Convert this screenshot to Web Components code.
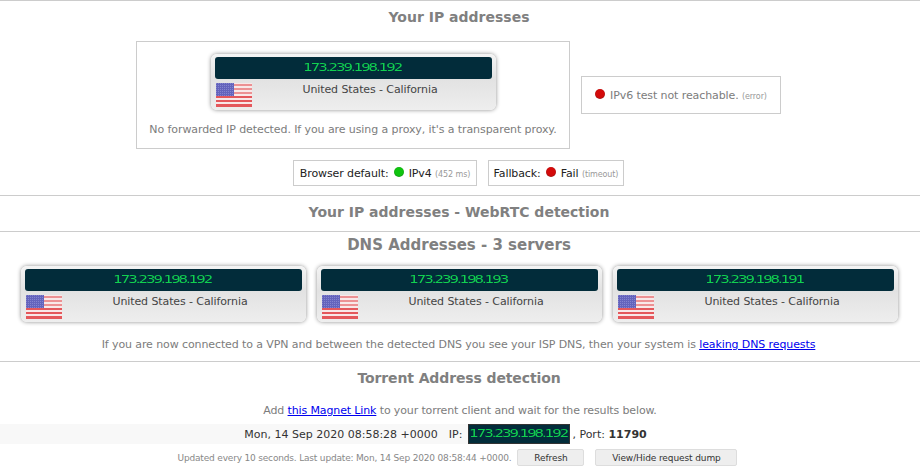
<!DOCTYPE html>
<html>
<head>
<meta charset="utf-8">
<style>
  html, body { margin: 0; padding: 0; background: #fff; }
  body { font-family: "DejaVu Sans", sans-serif; font-size: 11px; letter-spacing: -.1px; color: #222; width: 920px; height: 473px; overflow: hidden; }
</style>
</head>
<body>
<test-page></test-page>

<script>
class FlagUs extends HTMLElement {
  connectedCallback() {
    if (this.shadowRoot) return;
    this.attachShadow({ mode: "open" }).innerHTML = `
      <style>:host { display: block; width: 36px; height: 24px; } svg { display: block; filter: blur(.25px); }</style>
      <svg width="36" height="24" viewBox="0 0 36 24">
        <defs>
          <pattern id="stars" width="2" height="2" patternUnits="userSpaceOnUse">
            <rect width="2" height="2" fill="#6464bc"/>
            <rect width="1" height="1" fill="#8484cf"/>
          </pattern>
        </defs>
        <rect width="36" height="24" fill="#f8e8e8"/>
        <g fill="#ec9193">
          <rect x="18" y="1" width="18" height="2"/>
          <rect x="18" y="5" width="18" height="2"/>
          <rect x="18" y="9" width="18" height="2"/>
        </g>
        <g fill="#e4585c">
          <rect y="13" width="36" height="2"/>
          <rect y="17" width="36" height="2"/>
          <rect y="21" width="36" height="3"/>
        </g>
        <rect width="18" height="13" fill="url(#stars)"/>
      </svg>`;
  }
}
customElements.define("flag-us", FlagUs);

class IpText extends HTMLElement {
  connectedCallback() {
    if (this.shadowRoot) return;
    // squat, wide digits: the original is a digital font, stretched here to the same width
    this.attachShadow({ mode: "open" }).innerHTML = `
      <style>
        :host { display: inline-block; color: #11d050; font: 11px "DejaVu Sans", sans-serif; letter-spacing: -1.46px; transform: scaleX(1.35); white-space: nowrap; }
      </style>
      <slot></slot>`;
  }
}
customElements.define("ip-text", IpText);

class IpCard extends HTMLElement {
  connectedCallback() {
    if (this.shadowRoot) return;
    this.attachShadow({ mode: "open" }).innerHTML = `
      <style>
        :host { display: block; width: 285px; height: 56px; box-sizing: border-box; border-radius: 6px;
          background: linear-gradient(#f4f4f4, #e2e2e2 45%, #eeeeee); box-shadow: 0 0 4px rgba(0,0,0,.45); }
        .ip { margin: 3px 4px 0 4px; height: 22px; line-height: 22px; background: #022c3a; border-radius: 3px; text-align: center; padding-right: 1px; }
        .bottom { display: grid; grid-template-columns: 36px 1fr; padding: 4px 5px 0 5px; }
        .place { text-align: center; color: #444; line-height: 13px; padding-right: 2px; }
      </style>
      <div class="ip"><ip-text><slot></slot></ip-text></div>
      <div class="bottom"><flag-us></flag-us><div class="place">United States - California</div></div>`;
  }
}
customElements.define("ip-card", IpCard);

class SectionHeading extends HTMLElement {
  connectedCallback() {
    if (this.shadowRoot) return;
    this.attachShadow({ mode: "open" }).innerHTML = `
      <style>
        :host { display: block; text-align: center; font: bold 14px/17px "DejaVu Sans", sans-serif; letter-spacing: 0; color: #808080; padding-right: 2px; }
      </style>
      <slot></slot>`;
  }
}
customElements.define("section-heading", SectionHeading);

class StatusDot extends HTMLElement {
  connectedCallback() {
    if (this.shadowRoot) return;
    const green = this.getAttribute("color") === "green";
    const color = green ? "#0fc40f" : "#d40a0a";
    const dark = green ? "#1a6a1a" : "#6a1a1a";
    this.attachShadow({ mode: "open" }).innerHTML = `<style>
        :host { display: inline-block; white-space: normal; width: 10px; height: 10px; border-radius: 50%; margin: 0 5px 0 5px;
          background: radial-gradient(circle at 50% 45%, ${color} 50%, ${dark} 100%); }
      </style>`;
  }
}
customElements.define("status-dot", StatusDot);

class TestBox extends HTMLElement {
  connectedCallback() {
    if (this.shadowRoot) return;
    this.attachShadow({ mode: "open" }).innerHTML = `
      <style>
        :host { display: flex; align-items: center; justify-content: center; box-sizing: border-box; border: 1px solid #ccc; white-space: nowrap; }
      </style>
      <div><slot></slot></div>`;
  }
}
customElements.define("test-box", TestBox);

class TestPage extends HTMLElement {
  connectedCallback() {
    if (this.shadowRoot) return;
    this.attachShadow({ mode: "open" }).innerHTML = `
      <style>
        :host { display: block; }
        section { border-top: 1px solid #ccc; box-sizing: border-box; }
        .s1 { height: 195px; padding-top: 8px; }
        .s1 section-heading { height: 32px; }
        .top { display: flex; justify-content: center; align-items: center; gap: 11px; padding-right: 3px; }
        .main { width: 434px; height: 108px; box-sizing: border-box; border: 1px solid #ccc; display: flex; flex-direction: column; align-items: center; padding-top: 12px; }
        .main p { margin: 13px 0 0; color: #7c7c7c; line-height: 13px; letter-spacing: -.09px; }
        .v6 { width: 200px; height: 38px; color: #7c7c7c; padding-right: 5px; }
        .small { font-size: 8px; color: #999; }
        .pair { display: flex; justify-content: center; gap: 11px; margin-top: 11px; padding-right: 3px; }
        .pair test-box { height: 26px; }
        .s2 { height: 36px; padding-top: 8px; }
        .s3 { height: 130px; padding-top: 5px; }
        .s3 section-heading { font-size: 15px; }
        .cards { display: flex; justify-content: center; gap: 11px; margin-top: 12px; padding-right: 2px; }
        .s3 p { margin: 16px 0 0; text-align: center; color: #7c7c7c; line-height: 13px; padding-right: 3px; }
        a { color: #00e; text-decoration: underline; }
        .s4 { padding-top: 8px; }
        .s4 section-heading { letter-spacing: -.12px; }
        .s4 .add { margin: 17px 0 0; text-align: center; color: #7c7c7c; line-height: 13px; letter-spacing: -.13px; }
        .strip { margin-top: 7px; height: 20px; background: linear-gradient(to right, #f8f8f8 468px, #fff 468px); display: flex; justify-content: center; align-items: center; color: #333; padding-right: 29px; letter-spacing: 0; white-space: nowrap; }
        .date { margin-right: 11px; }
        .iplabel { margin-right: 6px; }
        .ipsm { background: #022c3a; height: 20px; line-height: 18px; border: 1px solid #333; box-sizing: border-box; width: 102px; text-align: center; margin-right: 2px; padding-right: 2px; }
        .port { white-space: pre; }
        .foot { display: flex; justify-content: center; align-items: center; margin-top: 5px; font-size: 9px; letter-spacing: -.18px; color: #888; padding-right: 5px; }
        button { font: 9px "DejaVu Sans", sans-serif; letter-spacing: -.1px; color: #333; background: #eee; border: 1px solid #ddd; border-radius: 2px; height: 17px; padding: 0; }
      </style>
      <section class="s1">
        <section-heading>Your IP addresses</section-heading>
        <div class="top">
          <div class="main">
            <ip-card>173.239.198.192</ip-card>
            <p>No forwarded IP detected. If you are using a proxy, it's a transparent proxy.</p>
          </div>
          <test-box class="v6"><status-dot color="red"></status-dot>IPv6 test not reachable. <span class="small">(error)</span></test-box>
        </div>
        <div class="pair">
          <test-box style="width:184px">Browser default:<status-dot color="green"></status-dot>IPv4 <span class="small">(452 ms)</span></test-box>
          <test-box style="width:136px">Fallback:<status-dot color="red"></status-dot>Fail <span class="small">(timeout)</span></test-box>
        </div>
      </section>
      <section class="s2"><section-heading>Your IP addresses - WebRTC detection</section-heading></section>
      <section class="s3">
        <section-heading>DNS Addresses - 3 servers</section-heading>
        <div class="cards">
          <ip-card>173.239.198.192</ip-card>
          <ip-card>173.239.198.193</ip-card>
          <ip-card>173.239.198.191</ip-card>
        </div>
        <p>If you are now connected to a VPN and between the detected DNS you see your ISP DNS, then your system is <a href="#">leaking DNS requests</a></p>
      </section>
      <section class="s4">
        <section-heading>Torrent Address detection</section-heading>
        <p class="add">Add <a href="#">this Magnet Link</a> to your torrent client and wait for the results below.</p>
        <div class="strip">
          <span class="date">Mon, 14 Sep 2020 08:58:28 +0000</span>
          <span class="iplabel">IP:</span>
          <span class="ipsm"><ip-text>173.239.198.192</ip-text></span>
          <span class="port">, Port: <b>11790</b></span>
        </div>
        <div class="foot">
          <span>Updated every 10 seconds. Last update: Mon, 14 Sep 2020 08:58:44 +0000.</span>
          <button style="width:67px;margin-left:6px">Refresh</button>
          <button style="width:142px;margin-left:11px">View/Hide request dump</button>
        </div>
      </section>`;
  }
}
customElements.define("test-page", TestPage);
</script>
</body>
</html>
